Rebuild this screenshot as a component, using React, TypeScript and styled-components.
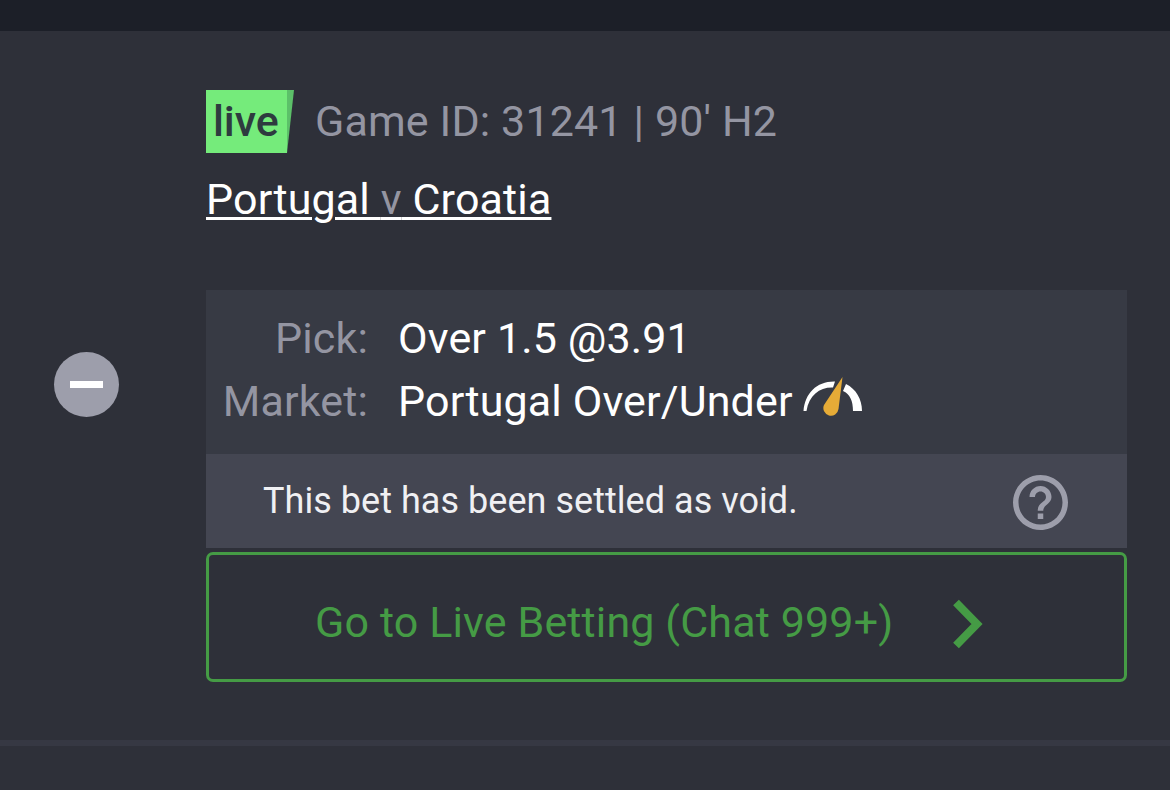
import React from "react";
import styled, { createGlobalStyle } from "styled-components";

const GlobalStyle = createGlobalStyle`
  *, *::before, *::after {
    box-sizing: border-box;
  }

  body {
    margin: 0;
    background-color: #2e3039;
    font-family: Roboto, "Liberation Sans", sans-serif;
    font-size: 43px;
    line-height: 63px;
    letter-spacing: 0.14px;
    color: #ffffff;
  }
`;

const Page = styled.div`
  display: flex;
  flex-direction: column;
  height: 790px;
  overflow: hidden;
`;

const TopBar = styled.div`
  height: 31px;
  background-color: #1c1f28;
`;

const BetRow = styled.section`
  display: grid;
  grid-template-columns: 206px 921px;
  height: 715px;
  border-bottom: 6px solid #363843;
`;

const RemoveCell = styled.div`
  padding: 321px 0 0 54px;
`;

const RemoveButton = styled.button`
  display: flex;
  align-items: center;
  justify-content: center;
  width: 65px;
  height: 65px;
  padding: 0;
  border: none;
  border-radius: 50%;
  background-color: #9d9eab;
  cursor: pointer;
`;

const Minus = styled.span`
  width: 33px;
  height: 7px;
  background-color: #ffffff;
`;

const Details = styled.div`
  padding-top: 59px;
`;

const GameInfo = styled.div`
  display: flex;
  height: 63px;
  color: #9495a2;
  white-space: nowrap;
`;

const LiveBadge = styled.div`
  width: 81px;
  padding-left: 7px;
  background-color: #75eb7b;
  color: #2e3b3f;
  font-weight: 500;
  letter-spacing: -0.1px;
`;

const BadgeFold = styled.svg`
  width: 7px;
  height: 63px;
  margin-right: 21px;
`;

const Teams = styled.a`
  display: block;
  width: max-content;
  margin: 15px 0 59px;
  text-decoration: underline;
  text-decoration-color: #ffffff;
  text-decoration-thickness: 3px;
  text-underline-offset: 3px;
  cursor: pointer;
`;

const Versus = styled.span`
  color: #9495a2;
`;

const Panel = styled.div`
  height: 164px;
  padding-top: 17px;
  background-color: #373a44;
`;

const PanelRow = styled.div`
  display: grid;
  grid-template-columns: 162px 1fr;
  column-gap: 30px;
  white-space: nowrap;
`;

const Label = styled.span`
  color: #9495a2;
  text-align: right;
`;

const Value = styled.span`
  display: flex;
`;

const GaugeIcon = styled.svg`
  width: 60px;
  height: 40px;
  margin: 7px 0 0 10px;
`;

const Notice = styled.div`
  display: flex;
  justify-content: space-between;
  height: 94px;
  padding: 16px 59px 0 57px;
  background-color: #444652;
  color: #f0f0f3;
  font-size: 36px;
  letter-spacing: 0.04px;
  white-space: nowrap;
`;

const HelpIcon = styled.svg`
  width: 55px;
  height: 55px;
  margin-top: 5px;
`;

const LiveBettingButton = styled.button`
  display: flex;
  align-items: flex-start;
  width: 100%;
  height: 130px;
  margin-top: 4px;
  padding: 36px 0 0 106px;
  border: 3px solid #459b45;
  border-radius: 7px;
  background: none;
  color: #459b45;
  font: inherit;
  letter-spacing: inherit;
  white-space: nowrap;
  cursor: pointer;
`;

const ChevronIcon = styled.svg`
  width: 32px;
  height: 52px;
  margin: 7px 0 0 59px;
`;

interface InfoRowProps {
    label: string;
    children: React.ReactNode;
}

const InfoRow: React.FC<InfoRowProps> = ({ label, children }) => (
    <PanelRow>
        <Label>{label}</Label>
        <Value>{children}</Value>
    </PanelRow>
);

const App: React.FC = () => {
    return (
        <>
            <GlobalStyle />
            <Page>
                <TopBar />
                <BetRow>
                    <RemoveCell>
                        <RemoveButton aria-label="Remove bet">
                            <Minus />
                        </RemoveButton>
                    </RemoveCell>
                    <Details>
                        <GameInfo>
                            <LiveBadge>live</LiveBadge>
                            <BadgeFold viewBox="0 0 7 63">
                                <path d="M0 0H7L0 63Z" fill="#5cc069" />
                            </BadgeFold>
                            <span>Game ID: 31241 | 90' H2</span>
                        </GameInfo>
                        <Teams>
                            Portugal <Versus>v</Versus> Croatia
                        </Teams>
                        <Panel>
                            <InfoRow label="Pick:">Over 1.5 @3.91</InfoRow>
                            <InfoRow label="Market:">
                                Portugal Over/Under
                                <GaugeIcon viewBox="0 0 60 40">
                                    <path d="M0.5 34C2 16 14 4 32 4.5L30 10.5C17 10 6 18 3.5 34Z" fill="#ffffff" />
                                    <path d="M43 7C53 12 59 22 59 34H50C50 24 47 17 40 14Z" fill="#ffffff" />
                                    <path d="M39.5 0L35.5 32A7.6 7.6 0 1 1 21 28Z" fill="#e6ab37" />
                                </GaugeIcon>
                            </InfoRow>
                        </Panel>
                        <Notice>
                            <span>This bet has been settled as void.</span>
                            <HelpIcon viewBox="2 2 20 20" fill="#9d9eab">
                                <path d="M11 18h2v-2h-2v2zm1-16C6.48 2 2 6.48 2 12s4.48 10 10 10 10-4.48 10-10S17.52 2 12 2zm0 18c-4.41 0-8-3.59-8-8s3.59-8 8-8 8 3.59 8 8-3.59 8-8 8zm0-14c-2.21 0-4 1.79-4 4h2c0-1.1.9-2 2-2s2 .9 2 2c0 2-3 1.75-3 5h2c0-2.25 3-2.5 3-5 0-2.21-1.79-4-4-4z" />
                            </HelpIcon>
                        </Notice>
                        <LiveBettingButton>
                            Go to Live Betting (Chat 999+)
                            <ChevronIcon viewBox="0 0 32 52" fill="none" stroke="#459b45">
                                <path d="M4 4.5L25 26L4 47.5" strokeWidth="8" />
                            </ChevronIcon>
                        </LiveBettingButton>
                    </Details>
                </BetRow>
            </Page>
        </>
    );
};

export default App;
